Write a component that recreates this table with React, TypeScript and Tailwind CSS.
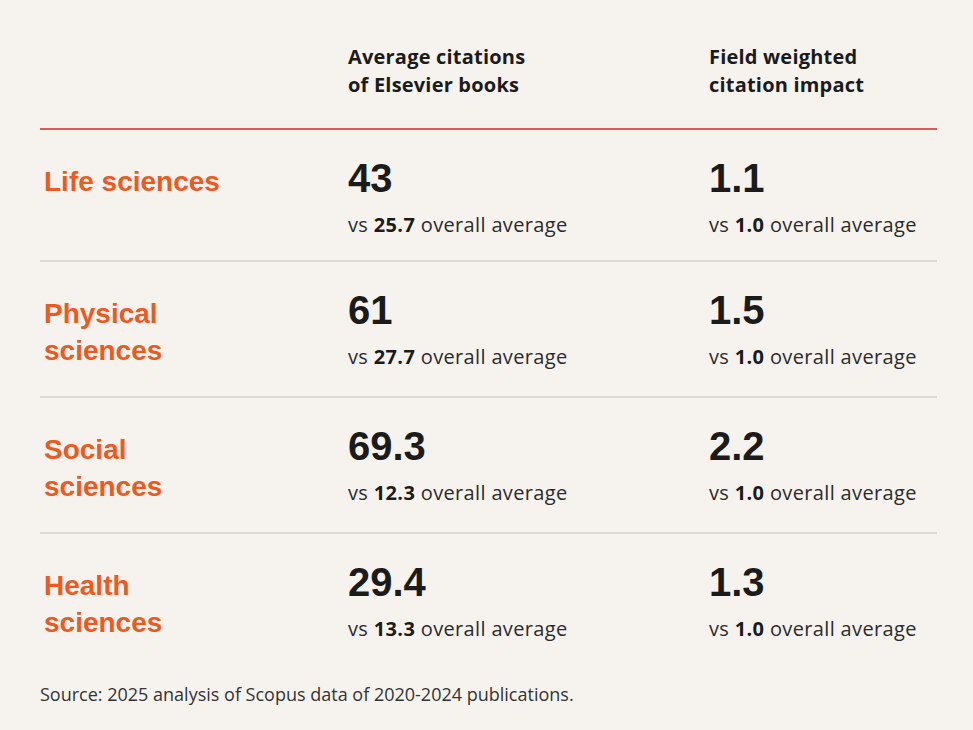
import React from 'react';

type Row = {
  label: string[];
  avg: string;
  avgBase: string;
  fwci: string;
  fwciBase: string;
};

const rows: Row[] = [
  { label: ['Life sciences'], avg: '43', avgBase: '25.7', fwci: '1.1', fwciBase: '1.0' },
  { label: ['Physical', 'sciences'], avg: '61', avgBase: '27.7', fwci: '1.5', fwciBase: '1.0' },
  { label: ['Social', 'sciences'], avg: '69.3', avgBase: '12.3', fwci: '2.2', fwciBase: '1.0' },
  { label: ['Health', 'sciences'], avg: '29.4', avgBase: '13.3', fwci: '1.3', fwciBase: '1.0' },
];

const Stat: React.FC<{ value: string; base: string }> = ({ value, base }) => (
  <div className="flex flex-col">
    <div className="font-['Liberation_Sans',Arial,sans-serif] text-[40px] font-bold leading-[44px] text-[#1b1b1b]">
      {value}
    </div>
    <div className="mt-[11px] font-['Open_Sans','Noto_Sans',sans-serif] text-[20px] leading-[28px] tracking-[0.35px] text-[#2b2b2b]">
      vs <span className="font-bold text-[#1b1b1b]">{base}</span> overall average
    </div>
  </div>
);

const App: React.FC = () => {
  return (
    <div className="min-h-screen w-full bg-[#f6f3ee]">
      <div className="mx-[40px] w-[897px]">
        {/* Header */}
        <div className="grid grid-cols-[308px_361px_1fr] border-b-2 border-[#e15656] pt-[43px] pb-[29px] font-['Open_Sans','Noto_Sans',sans-serif] text-[20px] font-bold leading-[28px] tracking-[0.2px] text-[#1b1b1b]">
          <div />
          <div>
            Average citations
            <br />
            of Elsevier books
          </div>
          <div>
            Field weighted
            <br />
            citation impact
          </div>
        </div>

        {/* Rows */}
        {rows.map((row, i) => (
          <div
            key={row.avg}
            className={`grid grid-cols-[308px_361px_1fr] items-start pt-[26px] pb-[21px] ${
              i < rows.length - 1 ? 'border-b-2 border-[#dcd9d3]' : ''
            }`}
          >
            <div className="mt-[7px] mb-[6px] pl-[4px] font-['Liberation_Sans',Arial,sans-serif] text-[28px] font-bold leading-[37px] text-[#eb5a1f]">
              {row.label.map((l) => (
                <div key={l}>{l}</div>
              ))}
            </div>
            <Stat value={row.avg} base={row.avgBase} />
            <Stat value={row.fwci} base={row.fwciBase} />
          </div>
        ))}

        <p className="mt-[13px] font-['Open_Sans','Noto_Sans',sans-serif] text-[18px] leading-[26px] text-[#333333]">
          Source: 2025 analysis of Scopus data of 2020-2024 publications.
        </p>
      </div>
    </div>
  );
};

export default App;
